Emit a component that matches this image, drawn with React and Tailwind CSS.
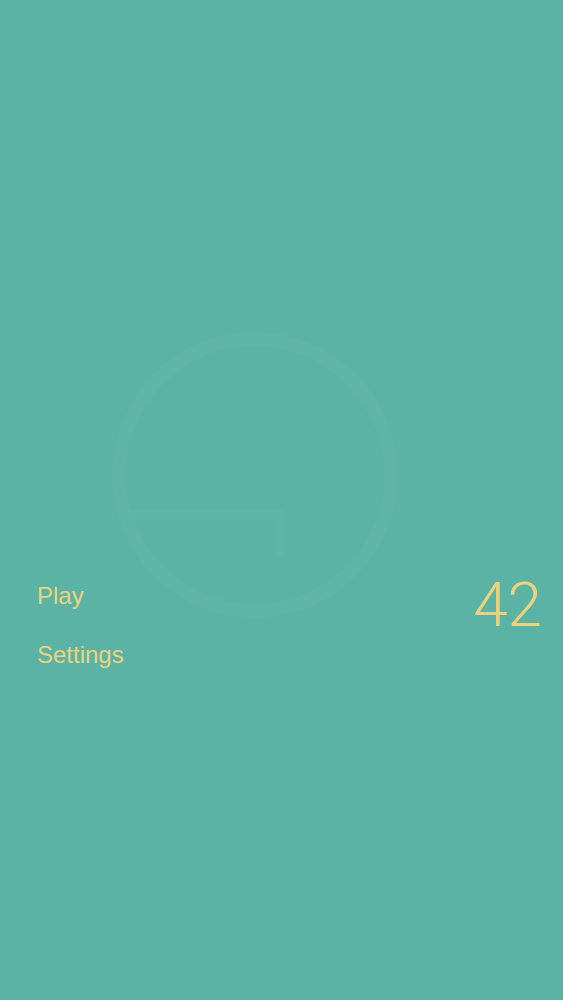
export default function App() {
  return (
    <div
      className="relative h-[1000px] w-full overflow-hidden bg-[#5bb3a5]"
      style={{ fontFamily: '"Liberation Sans", Arial, sans-serif' }}
    >
      <svg
        className="absolute left-[110px] top-[325px]"
        width="290"
        height="300"
        viewBox="0 0 290 300"
        fill="none"
      >
        <circle cx="145" cy="150" r="136" stroke="#ffffff" strokeOpacity="0.025" strokeWidth="14" />
        <path d="M20 190 H170 V230" stroke="#ffffff" strokeOpacity="0.02" strokeWidth="10" />
      </svg>

      <div className="relative flex items-start justify-between pl-[37px] pr-[21px] pt-[572px]">
        <div className="flex flex-col gap-[31px] pt-[10px] text-[24px] leading-[28px] text-[#ecd27c]">
          <span>Play</span>
          <span>Settings</span>
        </div>
        <div
          className="pt-[2px] text-[62px] font-light leading-none text-[#ecd27c]"
          style={{ fontFamily: 'Roboto, sans-serif' }}
        >
          42
        </div>
      </div>
    </div>
  );
}
